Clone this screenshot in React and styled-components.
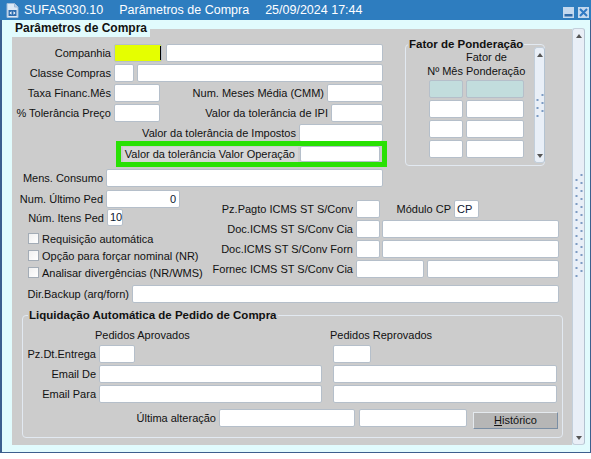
import React from 'react';
import styled, { createGlobalStyle } from 'styled-components';

const GlobalStyle = createGlobalStyle`
    html, body {
        margin: 0;
        padding: 0;
        background: #ffffff;
    }
    body {
        font-family: "Liberation Sans", Arial, sans-serif;
        font-size: 11px;
        color: #111;
    }
`

// #region Window chrome

const Window = styled.div`
    width: 591px;
    height: 453px;
    display: flex;
    flex-direction: column;
`

const TitleBar = styled.div`
    height: 20px;
    flex: none;
    display: flex;
    align-items: center;
    padding: 0 2px 0 6px;
    background: #2e7dbf;
    color: #ffffff;
    font-size: 12.5px;
    white-space: nowrap;
`

const TitleText = styled.span`
    margin-left: ${p => p.$ml || 0}px;
`

const TitleButtons = styled.div`
    margin-left: auto;
    display: flex;
    gap: 4px;
    align-self: flex-end;
    margin-bottom: 2px;
`

const TitleButton = styled.div`
    width: 11px;
    height: 11px;
    background: #c3d8ee;
    display: flex;
    align-items: center;
    justify-content: center;
`

const Body = styled.div`
    flex: 1;
    display: flex;
    padding: 9px 5px 7px 10px;
    background: #e1fbfd;
    border-left: 2px solid #3c5f8e;
    border-right: 1px solid #3c5f8e;
    border-bottom: 1px solid #3c5f8e;
`

const Panel = styled.div`
    position: relative;
    width: 560px;
    flex: none;
    display: flex;
    flex-direction: column;
    padding-top: 15px;
    box-sizing: border-box;
    background: #cccccc;
`

const TabLabel = styled.div`
    position: absolute;
    left: 0;
    top: -9px;
    height: 17px;
    padding: 0 3px;
    line-height: 16px;
    background: #e1fbfd;
    font-size: 12px;
    font-weight: bold;
`

const Scroll = styled.div`
    box-sizing: border-box;
    width: ${p => p.$w}px;
    flex: none;
    height: ${p => p.$h ? `${p.$h}px` : 'auto'};
    margin: ${p => p.$margin || 0};
    display: flex;
    flex-direction: column;
    align-items: center;
    justify-content: space-between;
    padding: 5px 0 4px;
    background: #e9eff7;
    border: 1px solid #c3cfdb;
    border-right-color: #b4c3d1;
    border-radius: 3px;
`

const ArrowUp = styled.div`
    width: 0;
    height: 0;
    border-left: 3.5px solid transparent;
    border-right: 3.5px solid transparent;
    border-bottom: 4px solid #555;
`

const ArrowDown = styled(ArrowUp)`
    border-bottom: none;
    border-top: 4px solid #555;
`

// #endregion

// #region Form parts

const Column = styled.div`
    display: flex;
    flex-direction: column;
    gap: ${p => p.$gap ?? 2}px;
    width: ${p => p.$w ? `${p.$w}px` : 'auto'};
    flex: none;
    padding-top: ${p => p.$pt || 0}px;
    margin-top: ${p => p.$mt || 0}px;
`

const Row = styled.div`
    display: flex;
    align-items: center;
    height: ${p => p.$h || 18}px;
    margin-top: ${p => p.$mt || 0}px;
`

const Label = styled.div`
    box-sizing: border-box;
    width: ${p => p.$w}px;
    flex: none;
    padding-right: 3px;
    text-align: right;
    white-space: nowrap;
`

const Field = styled.div`
    box-sizing: border-box;
    width: ${p => p.$w}px;
    height: ${p => p.$h || 18}px;
    flex: none;
    margin-left: ${p => p.$ml || 0}px;
    padding: 0 3px 0 2px;
    background: ${p => p.$bg || '#ffffff'};
    border: 1px solid #b5bfca;
    border-radius: 2px;
    line-height: ${p => (p.$h || 18) - 2}px;
    text-align: ${p => p.$align || 'left'};
    color: #0c1730;
`

const ActiveField = styled(Field)`
    display: flex;
    justify-content: flex-end;
    align-items: center;
    padding: 0;
`

const Caret = styled.span`
    width: 1px;
    height: 14px;
    background: #000;
`

const Highlight = styled.div`
    position: relative;
    z-index: 1;
    box-sizing: border-box;
    width: 271px;
    height: 26px;
    margin: -3px 0 0 104px;
    display: flex;
    align-items: center;
    gap: 2px;
    padding: 0 2px;
    border: 5px solid #29e104;
`

const HighlightLabel = styled(Label)`
    height: 15px;
    line-height: 15px;
    background: #d6d6d6;
`

const TopSection = styled.div`
    display: flex;
    align-items: flex-start;
`

const Group = styled.fieldset`
    box-sizing: border-box;
    width: ${p => p.$w}px;
    height: ${p => p.$h}px;
    margin: ${p => p.$margin};
    padding: 0;
    border: 1px solid #e2e9f1;
    border-radius: 4px;
    min-width: 0;
`

const GroupTitle = styled.legend`
    margin-left: ${p => p.$ml}px;
    padding: 0 1px;
    font-size: 11.5px;
    font-weight: bold;
    line-height: 13px;
`

const FatorBody = styled.div`
    display: flex;
    align-items: flex-start;
    padding-left: 23px;
`

const FatorTable = styled.div`
    display: grid;
    grid-template-columns: 34px 58px;
    grid-template-rows: 27px;
    grid-auto-rows: 18px;
    column-gap: 3px;
    row-gap: 2px;
`

const FatorHead = styled.div`
    line-height: 14px;
    display: flex;
    align-items: flex-end;
    justify-content: ${p => p.$right ? 'flex-end' : 'flex-start'};
    white-space: nowrap;
`

const MiddleSection = styled.div`
    display: flex;
    align-items: flex-start;
    margin-top: 3px;
`

const CheckRow = styled.div`
    display: flex;
    align-items: center;
    height: 17px;
    padding-left: 16px;
    white-space: nowrap;
`

const CheckBox = styled.div`
    box-sizing: border-box;
    width: 11px;
    height: 11px;
    margin-right: 3px;
    background: linear-gradient(135deg, #f0f0f0, #ffffff);
    border: 1px solid #a3acb6;
`

const LiqHeaders = styled.div`
    display: flex;
    height: 14px;
    line-height: 14px;
    margin: 6px 0 3px 72px;
    white-space: nowrap;
`

const LiqHeader = styled.div`
    width: ${p => p.$w ? `${p.$w}px` : 'auto'};
`

const Cell = styled.div`
    width: ${p => p.$w}px;
    flex: none;
`

const Button = styled.div`
    box-sizing: border-box;
    width: 85px;
    height: 17px;
    margin: 3px 0 0 6px;
    align-self: flex-start;
    background: #b6b6b6;
    border: 1px solid;
    border-color: #e4e9ee #7a8ea4 #7a8ea4 #e4e9ee;
    line-height: 15px;
    text-align: center;
    u {
        text-decoration: underline;
    }
`

// #endregion

function Grip({ pairs, lift = 0 }) {
    const dots = [];
    for (let i = 0; i < pairs; i++) {
        dots.push(<rect key={`a${i}`} x="6.5" y={i * 8} width="2" height="2" fill="#7d9bc3" />);
        dots.push(<rect key={`b${i}`} x="1.5" y={i * 8 + 5} width="2" height="2" fill="#7d9bc3" />);
    }
    return (
        <svg width="10" height={pairs * 8} viewBox={`0 0 10 ${pairs * 8}`} style={{ marginBottom: lift }}>
            {dots}
        </svg>
    );
}

function FormIcon() {
    return (
        <svg width="13" height="15" viewBox="0 0 13 15">
            <path d="M1 0.5 H8.5 L12 4 V14.5 H1 Z" fill="#dce9f6" stroke="#9fbbd8" strokeWidth="1" />
            <path d="M8.5 0.5 V4 H12" fill="#b9d0e8" stroke="#9fbbd8" strokeWidth="1" />
            <rect x="2.5" y="7" width="8" height="6" fill="#2e6db0" />
            <path d="M3.5 10 L5.5 8.3 V11.7 Z M9.5 10 L7.5 8.3 V11.7 Z" fill="#ffffff" />
        </svg>
    );
}

export default function App() {
    return (
        <>
            <GlobalStyle />
            <Window>
                <TitleBar>
                    <FormIcon />
                    <TitleText $ml={5}>SUFAS030.10</TitleText>
                    <TitleText $ml={16}>Parâmetros de Compra</TitleText>
                    <TitleText $ml={16}>25/09/2024 17:44</TitleText>
                    <TitleButtons>
                        <TitleButton>
                            <svg width="9" height="9" viewBox="0 0 9 9">
                                <rect x="0.5" y="6" width="8" height="2.5" fill="#2f6aa8" />
                            </svg>
                        </TitleButton>
                        <TitleButton>
                            <svg width="9" height="9" viewBox="0 0 9 9">
                                <path d="M1 1 L8 8 M8 1 L1 8" stroke="#2f79c4" strokeWidth="2" />
                            </svg>
                        </TitleButton>
                    </TitleButtons>
                </TitleBar>
                <Body>
                    <Panel>
                        <TabLabel>Parâmetros de Compra</TabLabel>
                        <TopSection>
                            <Column $w={371}>
                                <Row>
                                    <Label $w={102}>Companhia</Label>
                                    <ActiveField $w={48} $bg="#e5ff00"><Caret /></ActiveField>
                                    <Field $w={217} $ml={4} />
                                </Row>
                                <Row>
                                    <Label $w={102}>Classe Compras</Label>
                                    <Field $w={20} />
                                    <Field $w={246} $ml={3} />
                                </Row>
                                <Row>
                                    <Label $w={102}>Taxa Financ.Mês</Label>
                                    <Field $w={46} />
                                    <Label $w={167}>Num. Meses Média (CMM)</Label>
                                    <Field $w={56} />
                                </Row>
                                <Row>
                                    <Label $w={102}>% Tolerância Preço</Label>
                                    <Field $w={46} />
                                    <Label $w={171}>Valor da tolerância de IPI</Label>
                                    <Field $w={52} />
                                </Row>
                                <Row>
                                    <Label $w={287}>Valor da tolerância de Impostos</Label>
                                    <Field $w={84} />
                                </Row>
                                <Highlight>
                                    <HighlightLabel $w={175}>Valor da tolerância Valor Operação</HighlightLabel>
                                    <Field $w={80} $h={16} />
                                </Highlight>
                                <Row>
                                    <Label $w={94}>Mens. Consumo</Label>
                                    <Field $w={277} />
                                </Row>
                            </Column>
                            <Group $w={140} $h={128} $margin="-6px 0 0 22px">
                                <GroupTitle $ml={2}>Fator de Ponderação</GroupTitle>
                                <FatorBody>
                                    <FatorTable>
                                        <FatorHead $right>Nº Mês</FatorHead>
                                        <FatorHead>Fator de<br />Ponderação</FatorHead>
                                        <Field $w={34} $bg="#c2dddd" />
                                        <Field $w={58} $bg="#c2dddd" />
                                        <Field $w={34} />
                                        <Field $w={58} />
                                        <Field $w={34} />
                                        <Field $w={58} />
                                        <Field $w={34} />
                                        <Field $w={58} />
                                    </FatorTable>
                                    <Scroll $w={11} $h={116} $margin="-4px -1px 0 auto">
                                        <ArrowUp />
                                        <Grip pairs={3} />
                                        <ArrowDown />
                                    </Scroll>
                                </FatorBody>
                            </Group>
                        </TopSection>

                        <MiddleSection>
                            <Column $w={193} $gap={1}>
                                <Row>
                                    <Label $w={94}>Num. Último Ped</Label>
                                    <Field $w={74} $align="right">0</Field>
                                </Row>
                                <Row $h={17}>
                                    <Label $w={95}>Núm. Itens Ped</Label>
                                    <Field $w={16} $h={17}>10</Field>
                                </Row>
                                <Column $gap={0} $mt={3}>
                                    <CheckRow><CheckBox />Requisição automática</CheckRow>
                                    <CheckRow><CheckBox />Opção para forçar nominal (NR)</CheckRow>
                                    <CheckRow><CheckBox />Analisar divergências (NR/WMS)</CheckRow>
                                </Column>
                            </Column>
                            <Column $pt={10}>
                                <Row>
                                    <Label $w={151}>Pz.Pagto ICMS ST S/Conv</Label>
                                    <Field $w={24} />
                                    <Label $w={74}>Módulo CP</Label>
                                    <Field $w={25}>CP</Field>
                                </Row>
                                <Row>
                                    <Label $w={151}>Doc.ICMS ST S/Conv Cia</Label>
                                    <Field $w={24} />
                                    <Field $w={177} $ml={2} />
                                </Row>
                                <Row>
                                    <Label $w={151}>Doc.ICMS ST S/Conv Forn</Label>
                                    <Field $w={24} />
                                    <Field $w={177} $ml={2} />
                                </Row>
                                <Row>
                                    <Label $w={151}>Fornec ICMS ST S/Conv Cia</Label>
                                    <Field $w={68} />
                                    <Field $w={132} $ml={3} />
                                </Row>
                            </Column>
                        </MiddleSection>

                        <Row $mt={4}>
                            <Label $w={120}>Dir.Backup (arq/forn)</Label>
                            <Field $w={427} />
                        </Row>

                        <Group $w={541} $h={129} $margin="6px 0 0 10px">
                            <GroupTitle $ml={5}>Liquidação Automática de Pedido de Compra</GroupTitle>
                            <LiqHeaders>
                                <LiqHeader $w={235}>Pedidos Aprovados</LiqHeader>
                                <LiqHeader>Pedidos Reprovados</LiqHeader>
                            </LiqHeaders>
                            <Column>
                                <Row>
                                    <Label $w={76}>Pz.Dt.Entrega</Label>
                                    <Cell $w={234}><Field $w={36} /></Cell>
                                    <Field $w={38} />
                                </Row>
                                <Row>
                                    <Label $w={76}>Email De</Label>
                                    <Cell $w={234}><Field $w={223} /></Cell>
                                    <Field $w={224} />
                                </Row>
                                <Row>
                                    <Label $w={76}>Email Para</Label>
                                    <Cell $w={234}><Field $w={223} /></Cell>
                                    <Field $w={224} />
                                </Row>
                            </Column>
                            <Row $mt={6}>
                                <Label $w={196}>Última alteração</Label>
                                <Field $w={136} />
                                <Field $w={108} $ml={4} />
                                <Button><u>H</u>istórico</Button>
                            </Row>
                        </Group>
                    </Panel>
                    <Scroll $w={13} $margin="-1px 0 0 0">
                        <ArrowUp />
                        <Grip pairs={13} lift={22} />
                        <ArrowDown />
                    </Scroll>
                </Body>
            </Window>
        </>
    );
}
